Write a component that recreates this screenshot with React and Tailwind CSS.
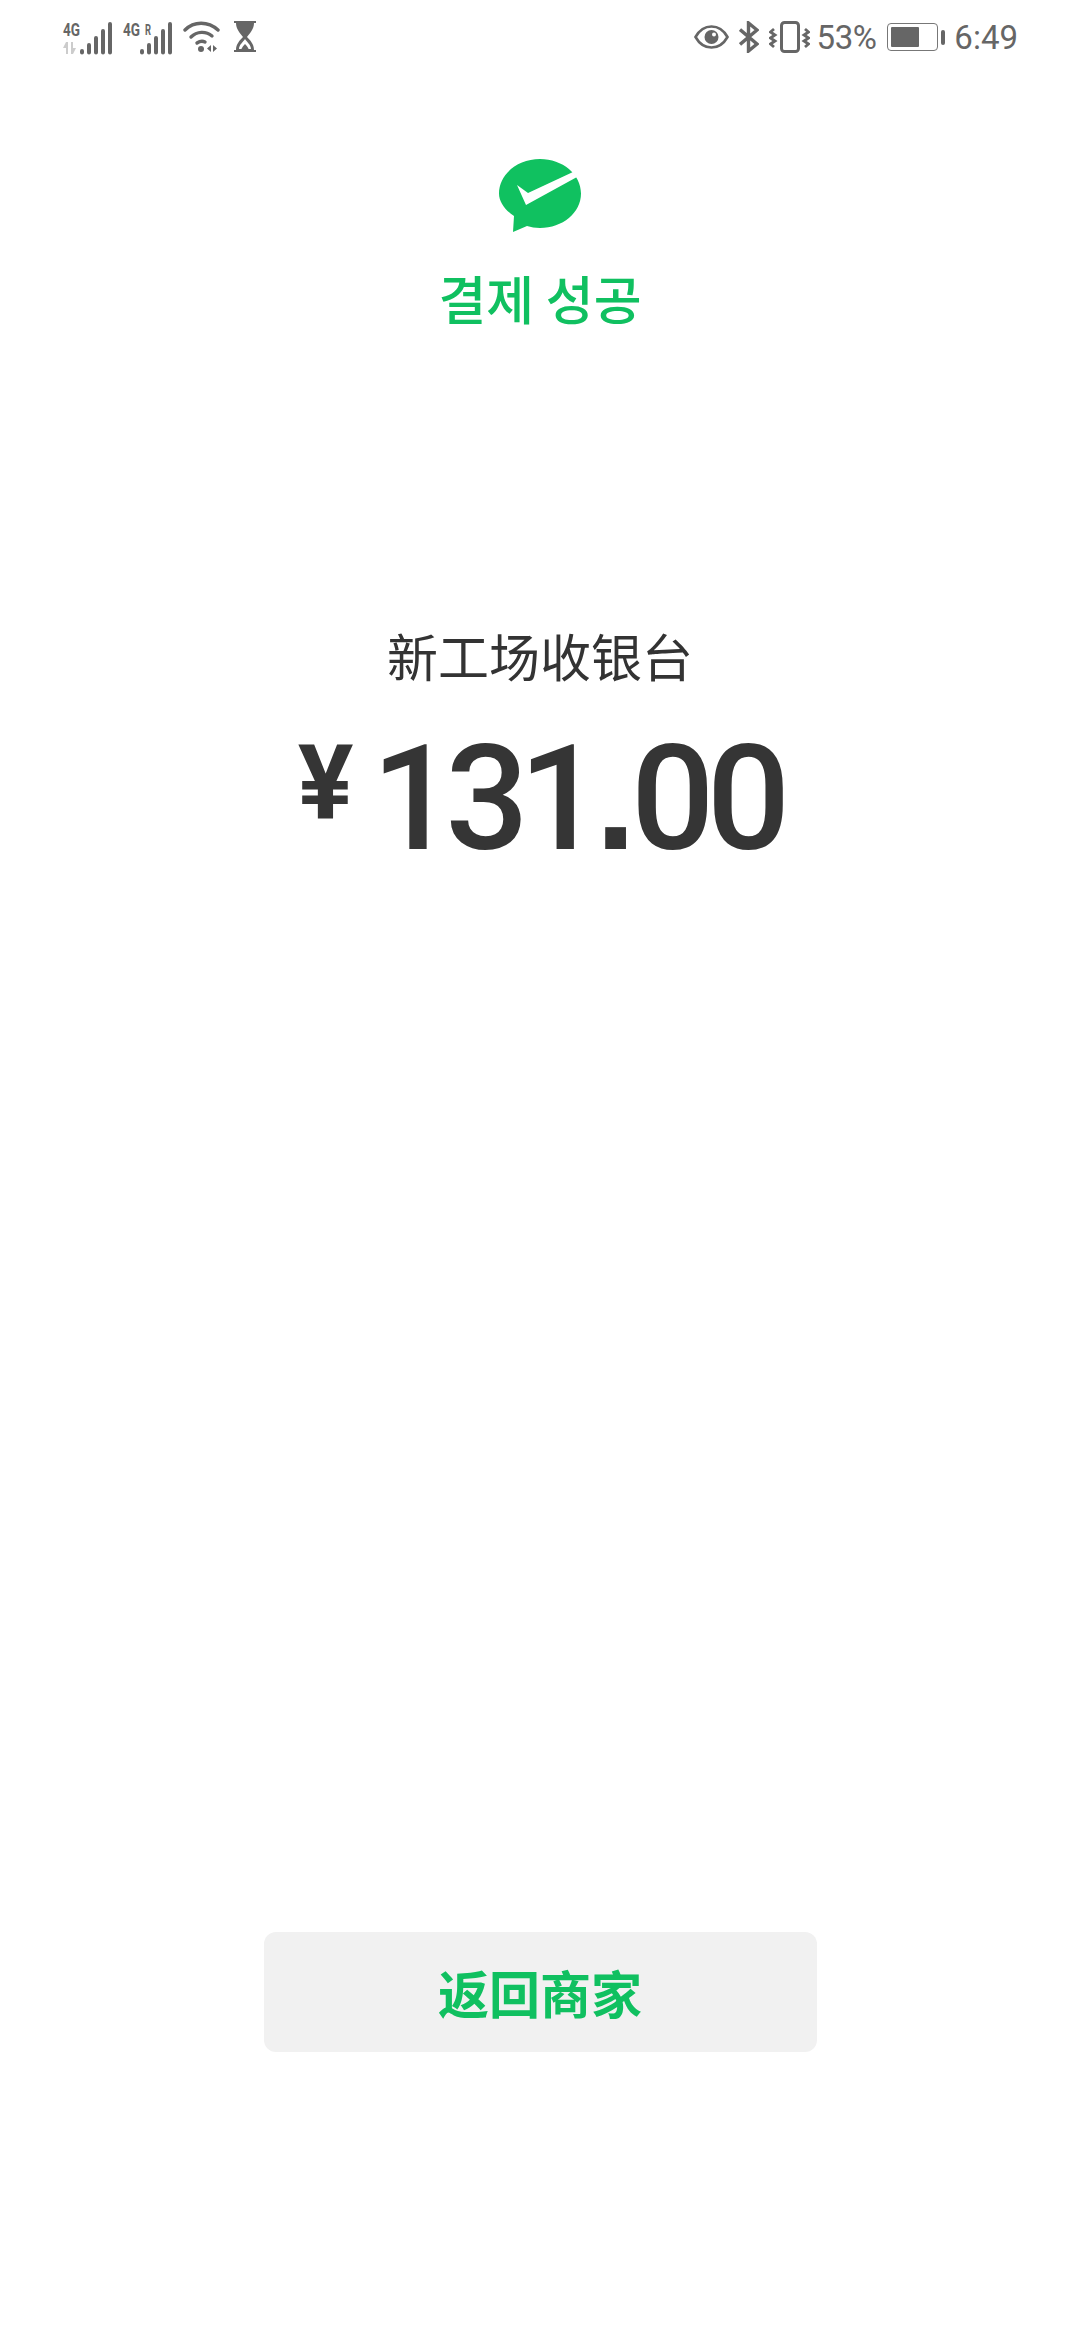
const KR = { fontFamily: '"Noto Sans CJK KR", "Noto Sans CJK SC", sans-serif' };
const SC = { fontFamily: '"Noto Sans CJK SC", sans-serif' };

function Signal({ first = false, roaming = false }) {
  return (
    <svg width="50" height="38" viewBox="0 -5 50 38" className="block overflow-visible">
      <text x="0" y="13" fontFamily="Roboto, sans-serif" fontWeight="700" fontSize="18" fill="#666" textLength="17" lengthAdjust="spacingAndGlyphs">4G</text>
      {roaming && <text x="22" y="12" fontFamily="Roboto, sans-serif" fontWeight="700" fontSize="14" fill="#666" textLength="6" lengthAdjust="spacingAndGlyphs">R</text>}
      {first && (
        <g fill="#ccc">
          <path d="M3 19h2v12H3v-6H0zM8 19h2v6l3 0-3 6H8z" />
        </g>
      )}
      <g stroke="#666" strokeWidth="4" strokeLinecap="round">
        <path d="M19 28v1.500M26 22v7.500M33 15v14.500M40 8v21.500M47 1v28.500" />
      </g>
    </svg>
  );
}

function LeftIcons() {
  return (
    <div className="flex items-center">
      <Signal first />
      <div className="w-[10px]" />
      <Signal roaming />
      <svg width="37" height="32" viewBox="0 0 37 32" className="ml-[10px] block" fill="none" stroke="#666" strokeWidth="3.400" strokeLinecap="round">
        <path d="M2 9C11 0 25 0 35 9" />
        <path d="M8 16c6-6 15-6 21-1" />
        <path d="M14 22c3-2 6-2 8-1" />
        <circle cx="18" cy="28" r="3" fill="#666" stroke="none" />
        <path d="M28 24v7l-4-3.500zM30 24v7l4-3.500z" fill="#666" stroke="none" />
      </svg>
      <svg width="22" height="32" viewBox="0 0 22 32" className="ml-[14px] block">
        <path d="M0 0h22v2H20c0 6-4 10-7 14 3 3 7 7 7 13h2v2H0v-2h2c0-6 4-10 7-13-3-4-7-8-7-14H0z" fill="#666" />
        <path d="M4 2h14c0 2-1 4-2 5H6C5 6 4 4 4 2z" fill="#666" />
        <path d="M5 28c0-4 4-7 6-10 2 3 6 6 6 10z" fill="#fff" />
        <path d="M7 29c1-3 3-5 4-6 1 1 3 3 4 6z" fill="#666" />
      </svg>
    </div>
  );
}

function RightIcons() {
  return (
    <div className="flex items-center text-[#666]">
      <svg width="35" height="24" viewBox="0 0 35 24" className="block" fill="none">
        <path d="M1.500 12C6 4 12 1.500 17.500 1.500S29 4 33.500 12C29 20 23 22.500 17.500 22.500S6 20 1.500 12z" stroke="#666" strokeWidth="2.600" />
        <circle cx="17.500" cy="12" r="7" fill="#666" />
        <circle cx="20" cy="9.500" r="2" fill="#fff" />
      </svg>
      <svg width="20" height="32" viewBox="0 0 20 32" className="ml-[10px] block" fill="none" stroke="#666" strokeWidth="3.400">
        <path d="M1 8.500 18 23 9.500 30V2L18 9 1 23.500" />
      </svg>
      <svg width="41" height="32" viewBox="0 0 41 32" className="ml-[10px] block" fill="none" stroke="#666">
        <rect x="12.500" y="1.500" width="17" height="29" rx="3" strokeWidth="3" />
        <path d="M5 8 1.500 11 6 14l-4.500 3L6 20l-4.500 3L5 26" strokeWidth="2.800" />
        <path d="M36 8l3.500 3L35 14l4.500 3L35 20l4.500 3L36 26" strokeWidth="2.800" />
      </svg>
      <span className="ml-[7px] text-[33px] font-normal leading-none tracking-[-0.5px]" style={{ fontFamily: 'Roboto, sans-serif' }}>53%</span>
      <div className="ml-[11px] flex items-center">
        <div className="flex h-[28px] w-[51px] items-stretch rounded-[4px] border border-[#777] p-[3px]">
          <div className="w-[28px] rounded-[1px] bg-[#666]" />
        </div>
        <div className="ml-[3px] h-[15px] w-[4px] rounded-[2px] bg-[#666]" />
      </div>
      <span className="ml-[9px] text-[33px] font-normal leading-none" style={{ fontFamily: 'Roboto, sans-serif' }}>6:49</span>
    </div>
  );
}

function Logo() {
  return (
    <svg width="82" height="73" viewBox="0 0 82 73" className="block">
      <path d="M41 0C63.600 0 82 15.300 82 34.500S63.600 69 41 69c-5 0-9-.7-13-2L14 73l1-16C6 51 0 43 0 34.500 0 15.300 18.400 0 41 0z" fill="#10c160" />
      <path d="M18 26 27 46 78 18 74 13 29 34z" fill="#fff" />
    </svg>
  );
}

export default function App() {
  return (
    <div className="flex min-h-[2340px] w-[1080px] flex-col items-center bg-white">
      <div className="flex h-[74px] w-full items-center justify-between pl-[63px] pr-[62px]">
        <LeftIcons />
        <RightIcons />
      </div>
      <div className="mt-[85px]"><Logo /></div>
      <h1 className="mt-[29px] text-[52px] font-medium leading-[74px] text-[#10c060]" style={KR}>결제 성공</h1>
      <p className="mt-[285px] text-[51px] leading-[70px] text-[#333]" style={SC}>新工场收银台</p>
      <div className="mt-[28px] flex items-start text-[#353535]" style={{ fontFamily: 'Roboto, sans-serif' }}>
        <span className="mr-[18px] text-[104px] font-bold leading-[130px]">¥</span>
        <span className="text-[147px] font-medium leading-[160px] tracking-[-10px]">131<span className="ml-[3px] mr-[5px] font-bold" style={{ fontFamily: '"Liberation Sans", sans-serif' }}>.</span><span className="tracking-[-8px]">00</span></span>
      </div>
      <div className="flex-1" />
      <button className="mb-[288px] flex h-[120px] w-[553px] items-center justify-center rounded-[12px] bg-[#f1f1f1] text-[51px] font-bold text-[#10c060]" style={SC}>返回商家</button>
    </div>
  );
}
